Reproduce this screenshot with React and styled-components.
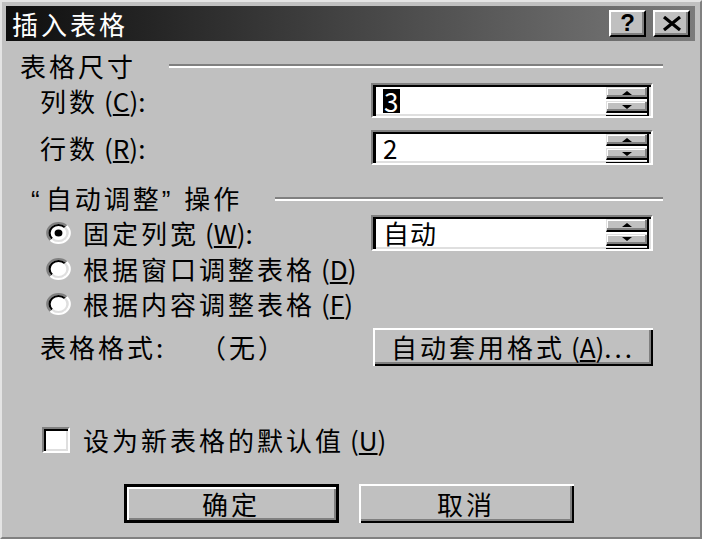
import React from "react";
import styled, { createGlobalStyle } from "styled-components";

const GlobalStyle = createGlobalStyle`
    html, body {
        margin: 0;
        padding: 0;
        background: #c0c0c0;
    }
    * {
        box-sizing: border-box;
    }
`;

const font = `"Noto Sans CJK SC", "Noto Sans", sans-serif`;

const Window = styled.div`
    width: 702px;
    height: 539px;
    background: #c0c0c0;
    border: 2px solid;
    border-color: #e4e4e4 #808080 #808080 #e4e4e4;
    padding: 4px 5px 0 4px;
    display: flex;
    flex-direction: column;
    font-family: ${font};
    font-size: 26px;
    color: #000;
    overflow: hidden;
`;

const TitleBar = styled.div`
    height: 35px;
    display: flex;
    align-items: center;
    padding: 0 5px 0 6px;
    background: linear-gradient(to right, #0e0e0e, #444 50%, #7a7a7a);
`;

const Title = styled.div`
    flex: 1;
    color: #fff;
    line-height: 1;
    letter-spacing: 3px;
    font-size: 26px;
`;

const TitleButton = styled.div`
    width: 37px;
    height: 27px;
    margin-left: 7px;
    background: #c0c0c0;
    border: 2px solid;
    border-color: #fff #000 #000 #fff;
    box-shadow: inset -2px -2px #808080;
    display: flex;
    align-items: center;
    justify-content: center;
    font-family: "Liberation Sans", sans-serif;
    font-weight: bold;
    font-size: 24px;
    line-height: 1;
    padding-bottom: 1px;
`;

const Body = styled.div`
    display: flex;
    flex-direction: column;
    padding: 0 32px 0 14px;
`;

const Row = styled.div`
    display: flex;
    align-items: center;
    height: ${(p) => p.$h}px;
    margin-top: ${(p) => p.$mt}px;
    padding-left: ${(p) => p.$pl || 0}px;
`;

const Text = styled.span`
    line-height: 1;
    letter-spacing: 3px;
    white-space: nowrap;
`;

const Quote = styled.span`
    font-family: "Liberation Sans", sans-serif;
    letter-spacing: ${(p) => (p.$close ? "14px" : "6px")};
`;

const Mnemonic = styled.span`
    letter-spacing: 0;
    margin-left: 6px;
`;

const SectionLine = styled.div`
    flex: 1;
    margin-left: 33px;
    height: 4px;
    border-top: 2px solid #808080;
    border-bottom: 2px solid #fff;
`;

const Label = styled(Text)`
    width: ${(p) => p.$w || "auto"};
`;

const Field = styled.div`
    margin-left: auto;
    margin-right: 10px;
    width: 282px;
    height: 100%;
    display: flex;
    align-items: center;
    background: #fff;
    border: 2px solid;
    border-color: #808080 #fff #fff #808080;
    box-shadow: inset 3px 2px #000, inset -2px -2px #dfdfdf;
    padding: 0 2px 0 10px;
`;

const FieldValue = styled.span`
    flex: 1;
    line-height: 24px;
    font-size: 26px;
    letter-spacing: 1px;
`;

const Selected = styled.span`
    display: inline-block;
    background: #000;
    color: #fff;
    padding: 0 1px;
`;

const Spinner = styled.div`
    width: 43px;
    align-self: stretch;
    display: flex;
    flex-direction: column;
    gap: 2px;
    padding: 2px 0 2px;
    border-right: 2px solid #000;
    border-bottom: 1px solid #000;
`;

const SpinButton = styled.div`
    flex: 1;
    background: #c0c0c0;
    border-top: 1px solid #dfdfdf;
    border-left: 1px solid #dfdfdf;
    border-bottom: 2px solid #000;
    box-shadow: inset -2px -2px #808080, inset 1px 1px #fff;
    display: flex;
    align-items: center;
    justify-content: center;
`;

const Arrow = styled.span`
    width: 0;
    height: 0;
    border-left: 5px solid transparent;
    border-right: 5px solid transparent;
    ${(p) =>
        p.$up
            ? "border-bottom: 4px solid #000;"
            : "border-top: 4px solid #000;"}
`;

const RadioWrap = styled.div`
    width: 27px;
    height: 24px;
    margin-right: 11px;
    display: flex;
    align-items: center;
`;

const CheckBox = styled.div`
    width: 28px;
    height: 26px;
    margin-right: 13px;
    background: #fff;
    border: 2px solid;
    border-color: #808080 #fff #fff #808080;
    box-shadow: inset 2px 2px #000, inset -2px -2px #dfdfdf;
`;

const PushButton = styled.div`
    height: 100%;
    width: ${(p) => p.$w}px;
    margin-left: ${(p) => (p.$right ? "auto" : "0")};
    margin-right: ${(p) => (p.$right ? "10px" : "0")};
    background: #c0c0c0;
    border: ${(p) => (p.$default ? "3px solid #000" : "0")};
    box-shadow: ${(p) =>
        p.$default
            ? "inset 2px 2px #fff, inset -2px -2px #808080"
            : "inset 2px 2px #fff, inset -2px -2px #000, inset -4px -4px #808080"};
    display: flex;
    align-items: center;
    justify-content: center;
`;

const Buttons = styled(Row)`
    justify-content: center;
    gap: 20px;
    margin-left: -18px;
    margin-right: -32px;
`;

const Mn = ({ k }) => (
    <Mnemonic>
        (<u>{k}</u>)
    </Mnemonic>
);

const Radio = ({ checked }) => {
    const a = 12 + 10 * 0.7071;
    const b = 12 - 10 * 0.7071;
    const c = 12 + 8 * 0.7071;
    const d = 12 - 8 * 0.7071;
    return (
        <RadioWrap>
            <svg width="27" height="24" viewBox="0 0 24 24" preserveAspectRatio="none">
                <circle cx="12" cy="12" r="9" fill="#fff" />
                <path d={`M${b} ${a} A10 10 0 0 1 ${a} ${b}`} stroke="#808080" strokeWidth="2" fill="none" />
                <path d={`M${a} ${b} A10 10 0 0 1 ${b} ${a}`} stroke="#fff" strokeWidth="2" fill="none" />
                <path d={`M${d} ${c} A8 8 0 0 1 ${c} ${d}`} stroke="#000" strokeWidth="2" fill="none" />
                <path d={`M${c} ${d} A8 8 0 0 1 ${d} ${c}`} stroke="#dfdfdf" strokeWidth="2" fill="none" />
                {checked && <circle cx="12" cy="12" r="3.5" fill="#000" />}
            </svg>
        </RadioWrap>
    );
};

const SpinField = ({ children }) => (
    <Field>
        <FieldValue>{children}</FieldValue>
        <Spinner>
            <SpinButton>
                <Arrow $up />
            </SpinButton>
            <SpinButton>
                <Arrow />
            </SpinButton>
        </Spinner>
    </Field>
);

const App = () => {
    return (
        <Window>
            <GlobalStyle />
            <TitleBar>
                <Title>插入表格</Title>
                <TitleButton>?</TitleButton>
                <TitleButton>
                    <svg width="22" height="15" viewBox="0 0 22 15">
                        <path d="M3 1 L19 14 M19 1 L3 14" stroke="#000" strokeWidth="3.2" />
                    </svg>
                </TitleButton>
            </TitleBar>
            <Body>
                <Row $h={30} $mt={10}>
                    <Text>表格尺寸</Text>
                    <SectionLine />
                </Row>
                <Row $h={35} $mt={2} $pl={20}>
                    <Label>
                        列数<Mn k="C" />:
                    </Label>
                    <SpinField>
                        <Selected>3</Selected>
                    </SpinField>
                </Row>
                <Row $h={35} $mt={12} $pl={20}>
                    <Label>
                        行数<Mn k="R" />:
                    </Label>
                    <SpinField>2</SpinField>
                </Row>
                <Row $h={30} $mt={19} $pl={11}>
                    <Text>
                        <Quote>“</Quote>自动调整<Quote $close>”</Quote>操作
                    </Text>
                    <SectionLine />
                </Row>
                <Row $h={36} $mt={1} $pl={25}>
                    <Radio checked />
                    <Label>
                        固定列宽<Mn k="W" />:
                    </Label>
                    <SpinField>自动</SpinField>
                </Row>
                <Row $h={30} $mt={3} $pl={25}>
                    <Radio />
                    <Label>
                        根据窗口调整表格<Mn k="D" />
                    </Label>
                </Row>
                <Row $h={30} $mt={5} $pl={25}>
                    <Radio />
                    <Label>
                        根据内容调整表格<Mn k="F" />
                    </Label>
                </Row>
                <Row $h={38} $mt={9} $pl={20}>
                    <Label $w="160px">表格格式:</Label>
                    <Text>（无）</Text>
                    <PushButton $w={280} $right>
                        <Text>
                            自动套用格式<Mn k="A" />...
                        </Text>
                    </PushButton>
                </Row>
                <Row $h={30} $mt={59} $pl={22}>
                    <CheckBox />
                    <Label>
                        设为新表格的默认值<Mn k="U" />
                    </Label>
                </Row>
                <Buttons $h={39} $mt={29}>
                    <PushButton $w={215} $default>
                        <Text>确定</Text>
                    </PushButton>
                    <PushButton $w={215}>
                        <Text>取消</Text>
                    </PushButton>
                </Buttons>
            </Body>
        </Window>
    );
};

export default App;
